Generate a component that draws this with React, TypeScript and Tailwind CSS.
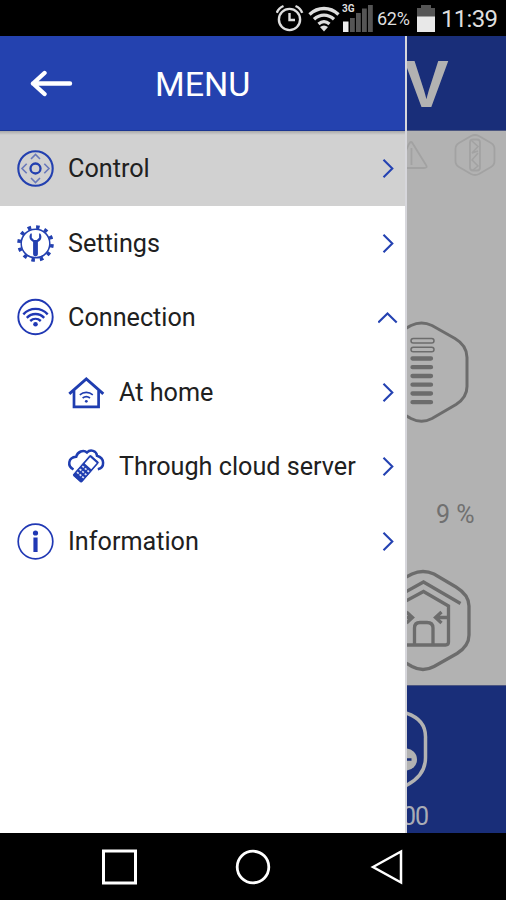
import type { ReactNode } from 'react';
import { clsx } from 'clsx';

type MenuItem = {
  label: string;
  icon: ReactNode;
  active?: boolean;
  nested?: boolean;
  expanded?: boolean;
};

function ControlIcon() {
  return (
    <svg viewBox="0 0 38 38" className="w-[38px] h-[38px]" fill="none" stroke="#2340b0">
      <circle cx="19.5" cy="19.5" r="17.2" strokeWidth="2.1" />
      <circle cx="19.5" cy="19.5" r="5" strokeWidth="2.3" />
      <g stroke="#6878ba" strokeWidth="1.6">
        <path d="M15 10 19.5 5.500l4.500 4.500M15 29l4.500 4.500 4.500-4.500M10.700 14.700 6 19.500l4.700 4.800M28.300 14.700l4.700 4.800-4.700 4.800" />
      </g>
    </svg>
  );
}

function SettingsIcon() {
  return (
    <svg viewBox="0 0 38 38" className="w-[38px] h-[38px]" fill="none" stroke="#2340b0">
      <circle cx="19.500" cy="19.500" r="14.300" strokeWidth="1.500" />
      <circle
        cx="19.500"
        cy="19.500"
        r="16.500"
        strokeWidth="3.600"
        pathLength="120"
        strokeDasharray="4.200 5.800"
        transform="rotate(2 19.500 19.500)"
      />
      <path
        d="M15 9.200c-2.600 2.600-1.900 7 2.100 8.700V30a2.400 2.400 0 0 0 4.800 0V17.900c3.900-1.700 4.500-6.100 2-8.700l-.8.500v4l-2.300 2.200h-2.800l-2.200-2.200v-4z"
        fill="#2340b0"
        stroke="none"
      />
    </svg>
  );
}

function ConnectionIcon() {
  return (
    <svg viewBox="0 0 38 38" className="w-[38px] h-[38px]" fill="none" stroke="#2038b4">
      <circle cx="19.500" cy="19" r="17.200" strokeWidth="1.900" />
      <path d="M7.300 16.300c6.900-7.200 17.500-7.200 24.400 0M10.800 19.800c5-5.100 12.400-5.100 17.400 0M14.200 23c3.100-2.900 7.500-2.900 10.600 0" strokeWidth="2.400" />
      <circle cx="19.500" cy="26.300" r="2.300" fill="#2038b4" stroke="none" />
    </svg>
  );
}

function HomeIcon() {
  return (
    <svg viewBox="0 0 38 38" className="w-[38px] h-[38px]" fill="none" stroke="#1f3db0">
      <path d="M2.300 20.800 19.300 6l17 14.800" strokeWidth="2.900" />
      <path d="M7 17.500v16.300h24.600V17.500" strokeWidth="2.700" />
      <path d="M12.800 21.800c3.800-3.200 9.200-3.200 13 0M15.600 25c2.300-1.800 5.100-1.800 7.400 0" strokeWidth="1.600" />
      <circle cx="19.300" cy="28.300" r="1.400" fill="#1f3db0" stroke="none" />
    </svg>
  );
}

function CloudIcon() {
  return (
    <svg viewBox="0 0 38 38" className="w-[38px] h-[38px]" fill="none" stroke="#1f3db0">
      <path
        d="M6.500 22.500C0 19 1 10.500 9.200 9.800 10.500 4.500 16.500 2.300 20 5.500c3.200-3.500 9.500-2 10 3.200 8 2.300 8 11.800.8 13.500"
        strokeWidth="2.500"
      />
      <g transform="rotate(41 18.500 22.500)">
        <rect x="11.800" y="7.500" width="13" height="28.500" rx="2" fill="#1f3db0" stroke="#fff" strokeWidth="1" />
        <path d="M14 10.200h8.600v8.300H14z" fill="#fff" stroke="none" />
        <path d="M13.800 22h9.500M13.800 26h9.500M13.800 30h9.500" stroke="#dfe3f5" strokeWidth="1.700" strokeDasharray="2.200 1.200" />
      </g>
    </svg>
  );
}

function InfoIcon() {
  return (
    <svg viewBox="0 0 38 38" className="w-[38px] h-[38px]" fill="none" stroke="#2038b4">
      <circle cx="19.500" cy="19.500" r="17.300" strokeWidth="1.700" />
      <circle cx="19.500" cy="11" r="2.600" fill="#2038b4" stroke="none" />
      <path d="M19.500 15.500V30" strokeWidth="4.200" />
    </svg>
  );
}

const items: MenuItem[] = [
  { label: 'Control', icon: <ControlIcon />, active: true },
  { label: 'Settings', icon: <SettingsIcon /> },
  { label: 'Connection', icon: <ConnectionIcon />, expanded: true },
  { label: 'At home', icon: <HomeIcon />, nested: true },
  { label: 'Through cloud server', icon: <CloudIcon />, nested: true },
  { label: 'Information', icon: <InfoIcon /> },
];

function Chevron({ up }: { up?: boolean }) {
  return (
    <svg viewBox="0 0 20 20" className="w-5 h-5 ml-auto shrink-0" fill="none" stroke="#2442b2" strokeWidth="2.100">
      <path d={up ? 'M.3 15.500 9.500 6.500l9.200 9' : 'M5.500 1.800 14.300 10.500l-8.800 8.700'} />
    </svg>
  );
}

function StatusBar() {
  return (
    <div className="flex items-center justify-end h-9 bg-black text-[#dedede] pr-[10px] shrink-0">
      <svg viewBox="0 0 28 28" className="w-7 h-7" fill="none" stroke="#dedede" strokeWidth="2.400">
        <circle cx="13.500" cy="15.500" r="10.600" />
        <path d="M13.500 9v7H19M.8 8.800C2 5.500 4 3.500 7.500 2M26.200 8.800C25 5.500 23 3.500 19.500 2" />
      </svg>
      <svg viewBox="0 0 32 28" className="w-8 h-7 ml-1" fill="none" stroke="#dedede" strokeWidth="3.300">
        <path d="M1.500 10.500c8.500-8 20.500-8 29 0M6 15.300c6-5.500 14-5.500 20 0M10.500 20c3.500-3 7.500-3 11 0" />
        <path d="m16 27.500-4-4.500c2.500-2 5.500-2 8 0z" fill="#dedede" stroke="none" />
      </svg>
      <div className="relative ml-[2px]">
        <svg viewBox="0 0 32 28" className="w-8 h-7" fill="#555">
          <path d="M1 17.500h5.500V28H1z" fill="#eee" />
          <path d="M8 14h4.800v14H8zM14 9h4.800v19H14zM20 4.500h4.800V28H20zM26 1h4.800v27H26z" />
        </svg>
        <span className="absolute left-0 top-0 font-['Roboto',sans-serif] font-bold text-[10px] leading-[10px]">3G</span>
      </div>
      <span className="font-['Roboto',sans-serif] text-[18px] leading-7 ml-[3px] mt-[2px] w-[35px] tracking-[-0.3px]">62%</span>
      <svg viewBox="0 0 18 28" className="w-[18px] h-7 ml-[5px]" fill="#555">
        <path d="M4 1h10v3h4v24H0V4h4z" />
        <path d="M0 12.500h18V28H0z" fill="#e8e8e8" />
      </svg>
      <span className="font-['Roboto',sans-serif] text-[24px] leading-7 ml-[6px] mt-[2px] w-[55px] whitespace-nowrap tracking-[-0.7px]">11:39</span>
    </div>
  );
}

function Drawer() {
  return (
    <aside className="w-[407px] shrink-0 bg-white border-r-2 border-[#d7d7dc]">
      <header className="flex items-center h-[95px] bg-[#2442af] pl-[30px] border-b border-[#1c3692]">
        <svg viewBox="0 0 44 28" className="w-11 h-7" fill="none" stroke="#fff" strokeWidth="4.400" strokeLinecap="round" strokeLinejoin="round">
          <path d="M40 14.500H3M14.500 4 3 14.500 14.500 25" />
        </svg>
        <h1 className="font-['Roboto',sans-serif] text-[34px] leading-10 text-white ml-[81px] mt-px">MENU</h1>
      </header>
      <nav>
        {items.map((item) => (
          <div
            key={item.label}
            className={clsx(
              'flex items-center h-[74.5px] pr-[7px] gap-[14px]',
              item.nested ? 'pl-[67px]' : 'pl-4',
              item.active && 'bg-[#d1d1d1] bg-linear-to-b from-[#a9a9a9] to-[#d1d1d1] to-[4px]',
            )}
          >
            {item.icon}
            <span className="font-['Roboto',sans-serif] text-[25.2px] leading-8 mt-[2px] text-[#202020] whitespace-nowrap">
              {item.label}
            </span>
            <Chevron up={item.expanded} />
          </div>
        ))}
      </nav>
    </aside>
  );
}

function DimmedScreen() {
  return (
    <main className="flex-1 min-w-0 flex flex-col overflow-hidden bg-[#b2b2b2]">
      <div className="h-[95px] shrink-0 bg-[#192e79] border-b border-[#4c5680]">
        <span className="block -ml-[3px] mt-[13px] font-['Liberation_Sans',sans-serif] font-bold text-[67px] leading-[70px] text-[#b2b2b2]">
          V
        </span>
      </div>

      {/* alarm and filter indicators */}
      <svg viewBox="407 131 99 50" className="w-[99px] h-[50px] shrink-0" fill="none" stroke="#a2a2a2" strokeWidth="1.800">
        <path d="M398 168 409 144q2-4 4 0l13 21q2 3-2 3H398M411.500 148v17" />
        <path d="m471 136-12 7q-3.500 2-3.500 6v12q0 4 3.500 6l12 7q4 2 8 0l12-7q3.500-2 3.500-6v-12q0-4-3.500-6l-12-7q-4-2-8 0z" />
        <rect x="470" y="139.500" width="10" height="31" rx="3" />
        <path d="m472 141 6 5.500-6 6.500 6-2M478 153l-6 7 6 6-5 4" strokeWidth="1.500" />
      </svg>

      {/* fan speed */}
      <svg viewBox="407 310 99 120" className="w-[99px] h-[120px] mt-[129px] shrink-0" fill="none" stroke="#6c6c6c" strokeWidth="3">
        <path d="M400 331.500l11-6q10.500-5 21 0l23 13q12 7 12 19v29q0 11-11 18l-24 14q-10.500 5.500-21 0l-11-6.500" />
        <rect x="411" y="338.500" width="23" height="4.500" rx="2.250" strokeWidth="1.500" />
        <rect x="411" y="347.300" width="23" height="4.500" rx="2.250" strokeWidth="1.500" />
        <path d="M412.500 358.500h18.500M412.500 367.200h18.500M412.500 376h18.500M412.500 384.700h18.500M412.500 393.500h18.500M412.500 402.200h18.500" strokeWidth="4.300" strokeLinecap="round" />
      </svg>
      <span className="mt-[70px] ml-[29px] font-['Roboto',sans-serif] text-[25px] leading-[30px] text-[#707070]">9 %</span>

      {/* supply / exhaust mode */}
      <svg viewBox="407 560 99 120" className="w-[99px] h-[120px] mt-[30px] shrink-0" fill="none" stroke="#6c6c6c" strokeWidth="3.300">
        <path d="M400 580.500l12-6.500q11-5 22 0l22 13q13 8 13 19v29q0 11-12 18.500l-23 13q-11 6-22 0l-12-7" />
        <path d="m400 595 23.500-13 37 21.500" />
        <path d="m400 604 23.500-12.500 25 14.500v36q0 3-3 3H400" />
        <path d="M414.500 645v-17q0-5.500 5.500-5.500h7q6 0 6 5.500v17M449 617.500h-14M441.500 612l-6 5.500 6 5.500M400 617.500h12M406.500 612l6 5.500-6 5.500" />
      </svg>

      <div className="h-[148px] mt-auto shrink-0 bg-[#192e79] border-t border-[#4c5680]">
        <svg viewBox="407 700 99 100" className="w-[99px] h-[100px] mt-[14px]" fill="none" stroke="#b2b2b2" strokeWidth="3.500">
          <path d="M400 711.500q26.500 5.500 25.500 27v19q0 21-25.500 30.500" />
          <circle cx="406" cy="759.500" r="11" fill="#b2b2b2" stroke="none" />
          <path d="M407 759.500h4.500" stroke="#192e79" strokeWidth="2.500" />
        </svg>
        <span className="block -ml-[5px] mt-px font-['Roboto',sans-serif] text-[25px] leading-8 tracking-[-1px] text-[#a9acb5]">00</span>
      </div>
    </main>
  );
}

function NavigationBar() {
  return (
    <div className="flex items-center justify-between h-[67px] bg-black shrink-0 pl-[101px] pr-[101px]">
      <svg viewBox="0 0 36 36" className="w-9 h-9" fill="none" stroke="#fff" strokeWidth="3">
        <path d="M2.500 2h32v32h-32z" />
      </svg>
      <svg viewBox="0 0 36 36" className="w-9 h-9" fill="none" stroke="#fff" strokeWidth="2.800">
        <circle cx="18" cy="18" r="15.800" />
      </svg>
      <svg viewBox="0 0 36 36" className="w-9 h-9" fill="none" stroke="#fff" strokeWidth="2.500">
        <path d="M4 18 32 2.500v31z" />
      </svg>
    </div>
  );
}

export default function App() {
  return (
    <div className="flex flex-col w-[506px] h-[900px] overflow-hidden bg-black">
      <StatusBar />
      <div className="flex h-[797px] shrink-0">
        <Drawer />
        <DimmedScreen />
      </div>
      <NavigationBar />
    </div>
  );
}
